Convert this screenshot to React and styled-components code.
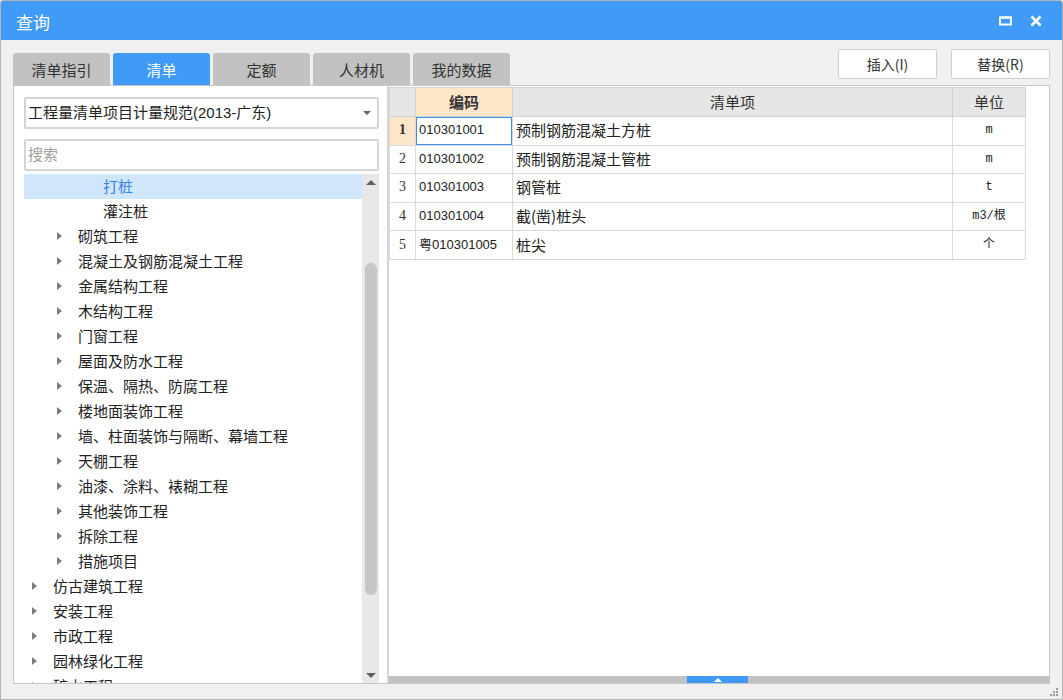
import React from 'react'
import styled, { createGlobalStyle } from 'styled-components'

const GlobalStyle = createGlobalStyle`
  html, body { margin: 0; padding: 0; background: #f0f0f0; }
  body { font-family: "Liberation Sans", "Noto Sans CJK SC", sans-serif; }
  * { box-sizing: border-box; }
`

const Window = styled.div`
  width: 1063px;
  height: 700px;
  display: flex;
  flex-direction: column;
  background: #f0f0f0;
  border: 1px solid #b4b4b4;
  border-radius: 3px 3px 0 0;
  overflow: hidden;
`

const TitleBar = styled.div`
  height: 39px;
  flex: none;
  background: #409af8;
  display: flex;
  align-items: center;
  padding: 0 12px 0 15px;
  color: #fff;
  font-family: "Noto Sans CJK SC", sans-serif;
  font-size: 17px;
`

const Title = styled.div`
  flex: 1;
  line-height: 20px;
  padding-top: 2px;
`

const TitleButton = styled.div`
  width: 28px;
  height: 24px;
  display: flex;
  align-items: center;
  justify-content: center;
  margin-left: 3px;
`

const TopRow = styled.div`
  height: 45px;
  flex: none;
  display: flex;
  align-items: flex-end;
  padding: 0 12px;
`

const Tabs = styled.div`
  display: flex;
  gap: 3px;
  flex: 1;
`

const Tab = styled.div`
  width: 97px;
  height: 32px;
  border-radius: 3px 3px 0 0;
  background: ${p => (p.$active ? '#409af8' : '#c2c2c2')};
  color: ${p => (p.$active ? '#fff' : '#333')};
  font-family: "Noto Sans CJK SC", sans-serif;
  font-size: 15px;
  display: flex;
  align-items: center;
  justify-content: center;
  padding-top: 1px;
`

const Buttons = styled.div`
  display: flex;
  gap: 14px;
  margin-bottom: 6px;
`

const Button = styled.div`
  width: 99px;
  height: 30px;
  background: #fff;
  border: 1px solid #cfcfcf;
  border-radius: 3px;
  display: flex;
  align-items: center;
  justify-content: center;
  font-size: 14px;
  color: #333;
  font-family: "Noto Sans CJK SC", sans-serif;
`

const Content = styled.div`
  flex: 1;
  min-height: 0;
  margin: 0 12px 15px 12px;
  display: flex;
  border: 1px solid #c6c6c6;
  background: #fff;
`

const LeftPanel = styled.div`
  width: 375px;
  flex: none;
  border-right: 2px solid #d6d6d6;
  padding: 11px 8px 0 10px;
  display: flex;
  flex-direction: column;
  min-height: 0;
`

const Field = styled.div`
  height: 32px;
  flex: none;
  border: 2px solid #d4d4d4;
  border-radius: 2px;
  display: flex;
  align-items: center;
  padding: 0 0 0 2px;
  font-size: 15px;
  color: ${p => (p.$placeholder ? '#a0a0a0' : '#222')};
  margin-bottom: ${p => p.$gap || 0}px;
`

const FieldText = styled.span`
  flex: 1;
  line-height: 20px;
`

const DropArrow = styled.span`
  width: 0;
  height: 0;
  border-left: 4px solid transparent;
  border-right: 4px solid transparent;
  border-top: 4px solid #666;
  margin-right: 6px;
`

const Tree = styled.div`
  flex: 1;
  min-height: 0;
  display: flex;
  margin-top: 3px;
`

const TreeList = styled.div`
  flex: 1;
  overflow: hidden;
`

const TreeRow = styled.div`
  height: 25px;
  display: flex;
  align-items: center;
  padding-left: ${p => 8 + (p.$level - 1) * 25}px;
  background: ${p => (p.$selected ? '#cfe6fb' : 'transparent')};
  color: ${p => (p.$selected ? '#3a85e0' : '#222')};
  font-size: 15px;
  font-family: "Noto Sans CJK SC", sans-serif;
  white-space: nowrap;
  line-height: 20px;
  padding-bottom: 1px;
`

const ArrowBox = styled.span`
  width: 21px;
  flex: none;
  display: flex;
  align-items: center;
`

const Arrow = styled.span`
  width: 0;
  height: 0;
  border-top: 4px solid transparent;
  border-bottom: 4px solid transparent;
  border-left: 5px solid #7c7c7c;
`

const ScrollBar = styled.div`
  width: 17px;
  flex: none;
  background: #e8e8e8;
  display: flex;
  flex-direction: column;
  align-items: center;
`

const ScrollArrow = styled.div`
  height: 16px;
  flex: none;
  display: flex;
  align-items: center;
  justify-content: center;
  &::after {
    content: '';
    width: 0;
    height: 0;
    border-left: 5px solid transparent;
    border-right: 5px solid transparent;
    ${p => (p.$down ? 'border-top: 5px solid #606060;' : 'border-bottom: 5px solid #606060;')}
  }
`

const ScrollTrack = styled.div`
  flex: 1;
  width: 100%;
  display: flex;
  justify-content: center;
`

const ScrollThumb = styled.div`
  width: 12px;
  background: #c6c6c6;
  border-radius: 6px;
`

const RightPanel = styled.div`
  flex: 1;
  min-width: 0;
  display: flex;
  flex-direction: column;
  padding-top: 1px;
`

const GridArea = styled.div`
  flex: 1;
  min-height: 0;
`

const Table = styled.table`
  border-collapse: collapse;
  table-layout: fixed;
  width: 636px;
  font-size: 15px;
  color: #222;
`

const Th = styled.th`
  height: 29px;
  padding: 0 0 1px;
  font-weight: ${p => (p.$bold ? 'bold' : 'normal')};
  background: ${p => (p.$hl ? '#fde5c8' : '#e6e6e6')};
  border: 1px solid #d2d2d2;
  font-family: "Noto Sans CJK SC", sans-serif;
  color: #333;
  text-align: center;
  line-height: 20px;
`

const Td = styled.td`
  height: 28.6px;
  padding: 0 0 1px ${p => (p.$center ? 0 : 3)}px;
  border: 1px solid #dadada;
  text-align: ${p => (p.$center ? 'center' : 'left')};
  white-space: nowrap;
  overflow: hidden;
  line-height: 20px;
`

const NumCell = styled(Td)`
  background: ${p => (p.$current ? '#fde5c8' : '#fff')};
  font-family: "Liberation Serif", serif;
  font-weight: ${p => (p.$current ? 'bold' : 'normal')};
  font-size: 14px;
  color: #333;
`

const CodeCell = styled(Td)`
  font-size: 13px;
  ${p => p.$focus && 'box-shadow: inset 0 0 0 1px #3b8fe6;'}
`

const NameCell = styled(Td)`
  font-family: "Noto Sans CJK SC", sans-serif;
`

const UnitCell = styled(Td)`
  font-family: "Liberation Mono", "Noto Sans CJK SC", monospace;
  font-size: 12px;
`

const SplitBar = styled.div`
  height: 7px;
  flex: none;
  background: #c2c2c2;
  display: flex;
`

const SplitHandle = styled.div`
  width: 61px;
  margin-left: 298px;
  background: #409af8;
  display: flex;
  align-items: center;
  justify-content: center;
  &::after {
    content: '';
    width: 0;
    height: 0;
    border-left: 4px solid transparent;
    border-right: 4px solid transparent;
    border-bottom: 4px solid #fff;
  }
`

const Footer = styled.div`
  position: relative;
`

const Grip = styled.svg`
  position: absolute;
  right: 3px;
  bottom: 2px;
`

const treeItems = [
  { level: 3, text: '打桩', selected: true },
  { level: 3, text: '灌注桩' },
  { level: 2, text: '砌筑工程', arrow: true },
  { level: 2, text: '混凝土及钢筋混凝土工程', arrow: true },
  { level: 2, text: '金属结构工程', arrow: true },
  { level: 2, text: '木结构工程', arrow: true },
  { level: 2, text: '门窗工程', arrow: true },
  { level: 2, text: '屋面及防水工程', arrow: true },
  { level: 2, text: '保温、隔热、防腐工程', arrow: true },
  { level: 2, text: '楼地面装饰工程', arrow: true },
  { level: 2, text: '墙、柱面装饰与隔断、幕墙工程', arrow: true },
  { level: 2, text: '天棚工程', arrow: true },
  { level: 2, text: '油漆、涂料、裱糊工程', arrow: true },
  { level: 2, text: '其他装饰工程', arrow: true },
  { level: 2, text: '拆除工程', arrow: true },
  { level: 2, text: '措施项目', arrow: true },
  { level: 1, text: '仿古建筑工程', arrow: true },
  { level: 1, text: '安装工程', arrow: true },
  { level: 1, text: '市政工程', arrow: true },
  { level: 1, text: '园林绿化工程', arrow: true },
  { level: 1, text: '矿山工程', arrow: true },
]

const rows = [
  { code: '010301001', name: '预制钢筋混凝土方桩', unit: 'm' },
  { code: '010301002', name: '预制钢筋混凝土管桩', unit: 'm' },
  { code: '010301003', name: '钢管桩', unit: 't' },
  { code: '010301004', name: '截(凿)桩头', unit: 'm3/根' },
  { code: '粤010301005', name: '桩尖', unit: '个' },
]

const tabs = ['清单指引', '清单', '定额', '人材机', '我的数据']

export default function App() {
  return (
    <>
      <GlobalStyle />
      <Window>
        <TitleBar>
          <Title>查询</Title>
          <TitleButton>
            <svg width="13" height="10" viewBox="0 0 13 10">
              <rect x="1" y="1.5" width="11" height="7" fill="none" stroke="#fff" strokeWidth="2" />
              <rect x="1" y="0.5" width="11" height="2" fill="#fff" />
            </svg>
          </TitleButton>
          <TitleButton>
            <svg width="12" height="12" viewBox="0 0 12 12">
              <path d="M1.5 1.5 L10.5 10.5 M10.5 1.5 L1.5 10.5" stroke="#fff" strokeWidth="2.6" />
            </svg>
          </TitleButton>
        </TitleBar>

        <TopRow>
          <Tabs>
            {tabs.map(t => (
              <Tab key={t} $active={t === '清单'}>{t}</Tab>
            ))}
          </Tabs>
          <Buttons>
            <Button>插入(I)</Button>
            <Button>替换(R)</Button>
          </Buttons>
        </TopRow>

        <Content>
          <LeftPanel>
            <Field $gap={10}>
              <FieldText>工程量清单项目计量规范(2013-广东)</FieldText>
              <DropArrow />
            </Field>
            <Field $placeholder>
              <FieldText>搜索</FieldText>
            </Field>
            <Tree>
              <TreeList>
                {treeItems.map(item => (
                  <TreeRow key={item.text} $level={item.level} $selected={item.selected}>
                    <ArrowBox>{item.arrow && <Arrow />}</ArrowBox>
                    {item.text}
                  </TreeRow>
                ))}
              </TreeList>
              <ScrollBar>
                <ScrollArrow />
                <ScrollTrack>
                  <ScrollThumb style={{ marginTop: 73, height: 332 }} />
                </ScrollTrack>
                <ScrollArrow $down />
              </ScrollBar>
            </Tree>
          </LeftPanel>

          <RightPanel>
            <GridArea>
              <Table>
                <colgroup>
                  <col style={{ width: 26 }} />
                  <col style={{ width: 97 }} />
                  <col style={{ width: 440 }} />
                  <col style={{ width: 73 }} />
                </colgroup>
                <thead>
                  <tr>
                    <Th />
                    <Th $hl $bold>编码</Th>
                    <Th>清单项</Th>
                    <Th>单位</Th>
                  </tr>
                </thead>
                <tbody>
                  {rows.map((r, i) => (
                    <tr key={r.code}>
                      <NumCell $center $current={i === 0}>{i + 1}</NumCell>
                      <CodeCell $focus={i === 0}>{r.code}</CodeCell>
                      <NameCell>{r.name}</NameCell>
                      <UnitCell $center>{r.unit}</UnitCell>
                    </tr>
                  ))}
                </tbody>
              </Table>
            </GridArea>
            <SplitBar>
              <SplitHandle />
            </SplitBar>
          </RightPanel>
        </Content>
        <Footer>
          <Grip width="10" height="10" viewBox="0 0 10 10">
            <g fill="#9a9a9a">
              <rect x="7" y="1" width="2" height="2" />
              <rect x="4" y="4" width="2" height="2" />
              <rect x="7" y="4" width="2" height="2" />
              <rect x="1" y="7" width="2" height="2" />
              <rect x="4" y="7" width="2" height="2" />
              <rect x="7" y="7" width="2" height="2" />
            </g>
          </Grip>
        </Footer>
      </Window>
    </>
  )
}
